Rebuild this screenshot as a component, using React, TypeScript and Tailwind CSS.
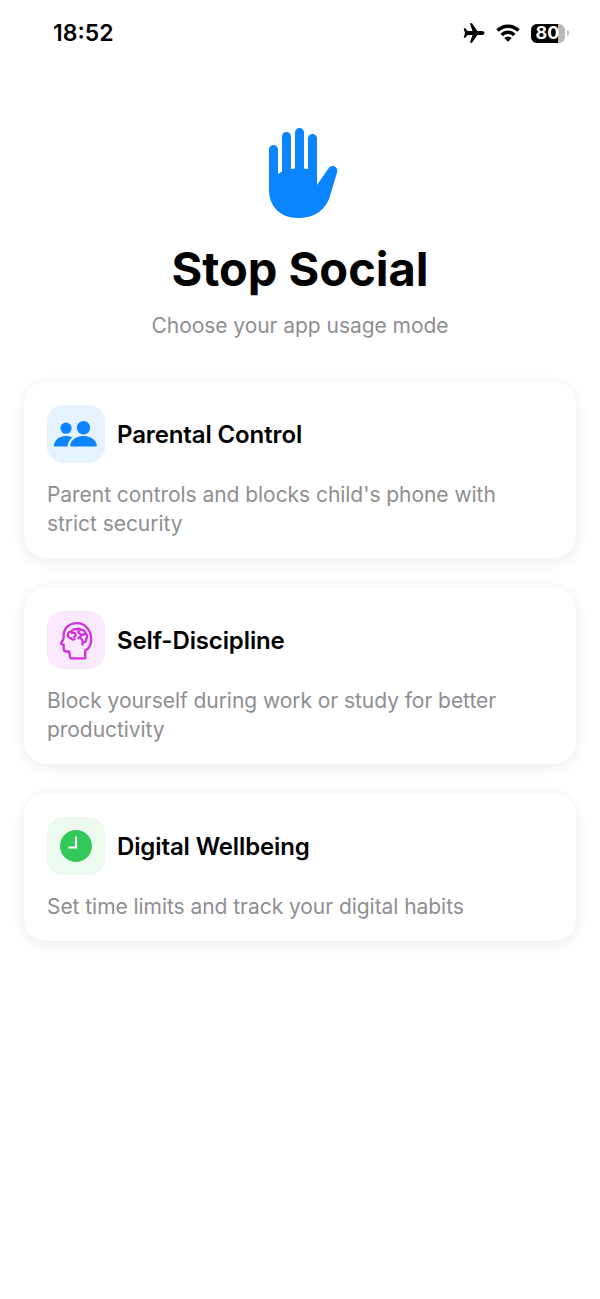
import type { ReactNode } from "react";

function StatusBar() {
  return (
    <div className="flex h-[66px] items-center justify-between pl-[53px] pr-[31px]">
      <span className="text-[23px] font-semibold text-black">18:52</span>
      <div className="flex items-center">
        <svg viewBox="0 0 22 20" className="h-[20px] w-[22px]" fill="black">
          <path d="M21.500 10c0-1.200-1.300-1.900-2.600-1.900h-4.600L9 .2H6.900l2.600 7.900H4.600L2.300 5.300H.7L2 10 .7 14.700h1.600l2.300-2.800h4.900l-2.600 7.900H9l5.300-7.900h4.600c1.300 0 2.600-.7 2.600-1.900z" />
        </svg>
        <svg viewBox="0 0 24 18" className="ml-[11px] h-[18px] w-[24px]" fill="none" stroke="black" strokeWidth="3.500">
          <path d="M1.500 6.500a15 15 0 0 1 21 0" />
          <path d="M5.600 10.900a9.200 9.200 0 0 1 12.800 0" />
          <path d="M12 17.800 8.300 14a5.200 5.200 0 0 1 7.400 0z" fill="black" stroke="none" />
        </svg>
        <div className="ml-[11px] flex h-[19px] w-[34px] overflow-hidden rounded-[6px] bg-[#b8b8b8]">
          <div className="flex h-full w-[27px] items-center justify-center bg-black pl-[6px]">
            <span className="text-[18px] font-bold leading-none text-white">80</span>
          </div>
        </div>
        <div className="ml-[2px] h-[6px] w-[2px] rounded-r-full bg-[#c4c4c4]" />
      </div>
    </div>
  );
}

function HandIcon() {
  return (
    <svg viewBox="268 127 70 92" className="ml-[5px] h-[92px] w-[70px]" fill="#0a84ff">
      <path d="M269 149.500a4.500 4.500 0 0 1 9 0V174l4-2.500V136.500a4.500 4.500 0 0 1 9 0V169l4-.4V132.500a4.500 4.500 0 0 1 9 0V168.600l4 .4V138.500a4.500 4.500 0 0 1 9 0V185L328 169c1.500-2.500 4-3.500 6.500-2.500s3.500 3 2.500 6L330 196C326 209 316 218 298 218C280 218 269 206 269 190z" />
    </svg>
  );
}

function ParentIcon() {
  return (
    <svg viewBox="0 0 44 26" className="h-[26px] w-[44px]" fill="#0a84ff">
      <circle cx="12" cy="7.200" r="5.600" />
      <circle cx="29.500" cy="6.700" r="6.700" />
      <path d="M.2 25.500c-.6 0-.2-3 1-5 2-3.200 6-5.500 10.800-5.500 2.500 0 4.500.5 6.200 1.500-2.800 2.400-4.500 5.500-4.700 9z" />
      <path d="M16.700 25.500c-.6 0-.7-2 .3-4 2-4 7-6.500 12.500-6.500s10.500 2.500 12.500 6.500c1 2 .9 4 .3 4z" />
    </svg>
  );
}

function BrainIcon() {
  return (
    <svg viewBox="0 0 36 42" className="h-[39px] w-[33px]" fill="none" stroke="#cf2fdc" strokeWidth="2.500" strokeLinecap="round" strokeLinejoin="round">
      <path d="M27.500 40.500V32c4-2 6.500-6.500 6.500-12.500C34 9.500 27 2 18.500 2 10 2 4 8 4 15.500c0 2 .2 3-.6 4.500L1.200 23.500c-.3.8 0 1.500 1 1.700L4 25.500v4.200c0 2 1.200 3.300 3.200 3.300H10l1 6.500c.2.800.6 1 1.500 1z" />
      <path d="M8.500 15c0-2.500 2-4 4-3.800.5-2 3-3.200 5-2.200 1.500-1.500 4.500-1.300 5.500.5 2.500-.5 5 1.500 4.800 4 2 1 2.500 4 .8 5.500.5 2-1 4-3 4" />
      <path d="M8.500 15c0 2 1.500 3.500 3.500 3.300.5 1.500 2.500 2.200 4 1.200" />
      <path d="M13 13c1.500-1 3.500-.5 4 1s-.5 3-2 3" />
      <path d="M20.500 10.500c-1 1-.5 3 1.500 3.200 1.200 1 1 3-.5 3.800l-1.500 1" />
      <path d="M23 19c1.500 1 2 3 1.500 6.500" />
      <path d="M26.500 13.500c-.5 1-1.300 1.500-2.500 1.500" />
    </svg>
  );
}

function ClockIcon() {
  return (
    <svg viewBox="0 0 32 32" className="h-[32px] w-[32px]">
      <circle cx="16" cy="16" r="16" fill="#34c759" />
      <path d="M16 6.500V17.500H8.500" fill="none" stroke="white" strokeWidth="2.200" />
    </svg>
  );
}

type ModeCardProps = {
  icon: ReactNode;
  iconBg: string;
  title: string;
  children: ReactNode;
};

function ModeCard({ icon, iconBg, title, children }: ModeCardProps) {
  return (
    <div className="rounded-[22px] bg-white px-[23px] pb-[20px] pt-[23px] shadow-[0_3px_16px_rgba(0,0,0,0.08)]">
      <div className="flex items-center gap-3">
        <div className={`flex h-[58px] w-[58px] items-center justify-center rounded-[16px] ${iconBg}`}>{icon}</div>
        <h2 className="mt-[2px] text-[24px] font-[580] tracking-[-0.12px] text-black">{title}</h2>
      </div>
      <p className="mt-[17px] pr-[10px] text-[21px] leading-[29px] tracking-[-0.05px] text-[#8e8e93]">{children}</p>
    </div>
  );
}

export default function App() {
  return (
    <div className="min-h-[1299px] bg-white font-['Inter',sans-serif]">
      <StatusBar />
      <div className="flex flex-col items-center pt-[61px]">
        <HandIcon />
        <h1 className="mt-[18px] text-[47px] font-bold leading-[64px] text-black">Stop Social</h1>
        <p className="mt-[11px] text-[21px] leading-[28px] tracking-[-0.05px] text-[#8e8e93]">Choose your app usage mode</p>
      </div>
      <div className="mt-[42px] flex flex-col gap-[30px] px-[24px]">
        <ModeCard icon={<ParentIcon />} iconBg="bg-[#e6f3ff]" title="Parental Control">
          Parent controls and blocks child's phone with strict security
        </ModeCard>
        <ModeCard icon={<BrainIcon />} iconBg="bg-[#f9e9fc]" title="Self-Discipline">
          Block yourself during work or study for better productivity
        </ModeCard>
        <ModeCard icon={<ClockIcon />} iconBg="bg-[#ebf9ee]" title="Digital Wellbeing">
          Set time limits and track your digital habits
        </ModeCard>
      </div>
    </div>
  );
}
